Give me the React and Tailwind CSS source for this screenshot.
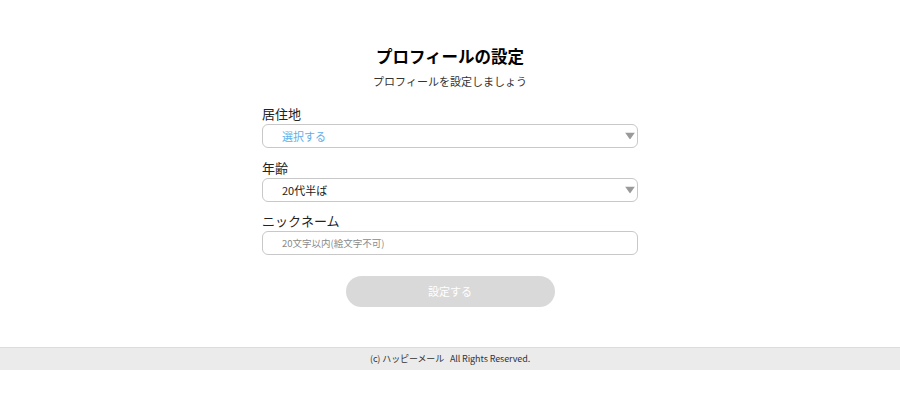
import React, { useState } from 'react';

const font = { fontFamily: '"Noto Sans CJK JP", "Noto Sans", sans-serif' };

const Arrow = () => (
  <svg
    className="pointer-events-none absolute right-[3px] top-1/2 -translate-y-1/2"
    width="10"
    height="7"
    viewBox="0 0 10 7"
  >
    <path d="M0 0 H10 L5 7 Z" fill="#9a9a9a" />
  </svg>
);

const SelectField = ({ label, value, onChange, options, placeholder, className = '' }) => (
  <div className={className}>
    <div className="text-[13px] leading-[20px] text-[#222]">{label}</div>
    <div className="relative">
      <select
        value={value}
        onChange={(e) => onChange(e.target.value)}
        className={`block h-[24px] w-full appearance-none rounded-[6px] border border-[#c8c8c8] bg-white pl-[19px] pr-6 text-[11px] leading-[22px] outline-none ${
          value ? 'text-[#222]' : 'text-[#63aee8]'
        }`}
        style={font}
      >
        {placeholder && <option value="">{placeholder}</option>}
        {options.map((o) => (
          <option key={o} value={o}>
            {o}
          </option>
        ))}
      </select>
      <Arrow />
    </div>
  </div>
);

export default function App() {
  const [area, setArea] = useState('');
  const [age, setAge] = useState('20代半ば');
  const [nick, setNick] = useState('');

  const ready = area && age && nick.trim();

  return (
    <div className="min-h-[407px] bg-white" style={font}>
      <main className="mx-auto w-[376px] pt-[43px]">
        <h1 className="text-center text-[16.5px] font-bold leading-[27px] text-black">
          プロフィールの設定
        </h1>
        <p className="mt-[3px] text-center text-[11px] leading-[16px] text-[#333]">
          プロフィールを設定しましょう
        </p>

        <SelectField
          className="mt-[15px]"
          label="居住地"
          value={area}
          onChange={setArea}
          placeholder="選択する"
          options={['東京都', '神奈川県', '大阪府', '愛知県', '福岡県']}
        />

        <SelectField
          className="mt-[10px]"
          label="年齢"
          value={age}
          onChange={setAge}
          options={['18〜19歳', '20代前半', '20代半ば', '20代後半', '30代前半']}
        />

        <div className="mt-[9px]">
          <div className="text-[13px] leading-[20px] text-[#222]">ニックネーム</div>
          <input
            type="text"
            value={nick}
            onChange={(e) => setNick(e.target.value)}
            placeholder="20文字以内(絵文字不可)"
            className="block h-[24px] w-full rounded-[6px] border border-[#c8c8c8] bg-white pl-[19px] pr-3 text-[9.5px] text-[#222] outline-none placeholder:text-[#8a8a8a]"
            style={font}
          />
        </div>

        <div className="mt-[21px] flex justify-center">
          <button
            disabled={!ready}
            className={`h-[31px] w-[209px] rounded-full text-[11px] text-white ${
              ready ? 'bg-[#f06292]' : 'bg-[#d9d9d9]'
            }`}
            style={font}
          >
            設定する
          </button>
        </div>
      </main>

      <footer className="mt-[40px] whitespace-pre border-t border-[#dcdcdc] bg-[#ebebeb] text-center text-[9px] leading-[22px] tracking-[-0.1px] text-[#333]">
        {'(c) ハッピーメール   All Rights Reserved.'}
      </footer>
    </div>
  );
}
